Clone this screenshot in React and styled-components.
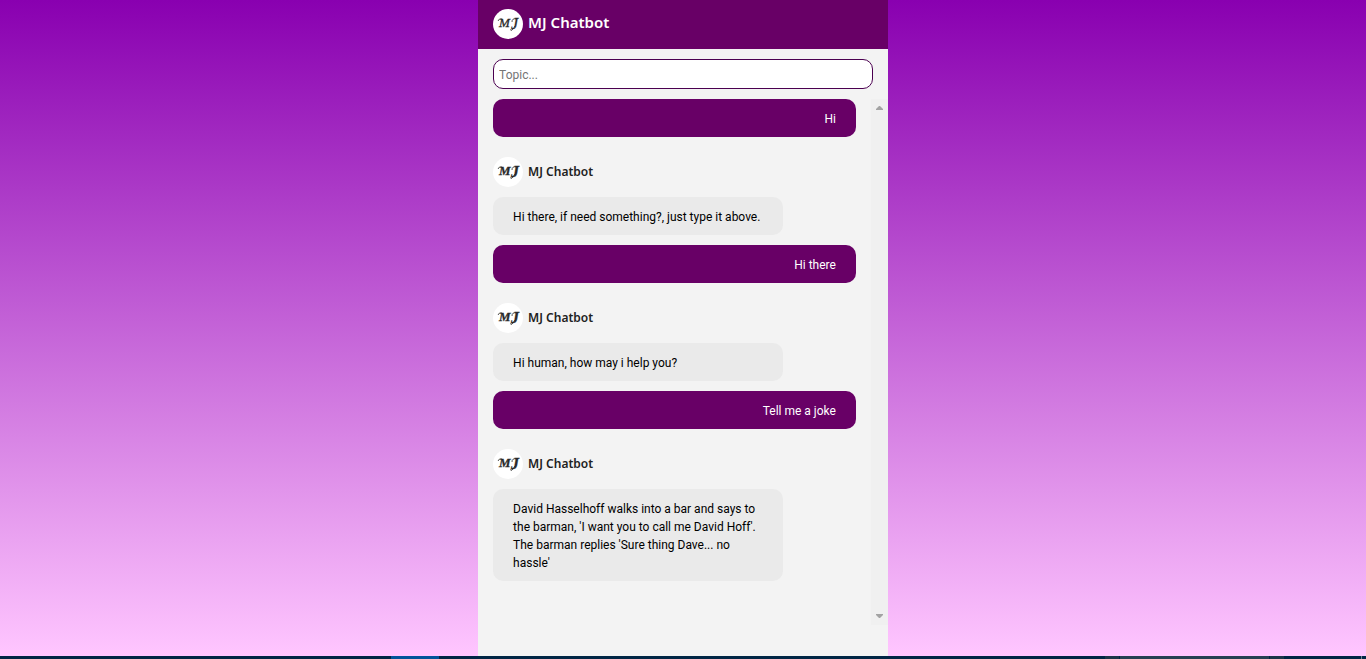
import React from "react";
import styled, { createGlobalStyle, css } from "styled-components";

const GlobalStyle = createGlobalStyle`
  * { box-sizing: border-box; }
  body {
    margin: 0;
    font-family: Roboto, "Noto Sans", sans-serif;
    font-size: 12px;
    line-height: 18px;
    color: #000;
  }
`;

const Page = styled.div`
  display: flex;
  flex-direction: column;
  height: 100vh;
`;

const Backdrop = styled.div`
  flex: 1;
  min-height: 0;
  display: flex;
  justify-content: center;
  background: linear-gradient(#8900b0, #ffc6ff);
`;

const Chat = styled.main`
  width: 30%;
  min-width: 320px;
  display: flex;
  flex-direction: column;
  background: #f3f3f3;
`;

const Header = styled.header`
  display: flex;
  align-items: center;
  gap: 5px;
  flex: none;
  padding: 9px 15px 10px;
  background: #680066;
  color: #fff;
`;

const Title = styled.h1`
  margin: 0;
  font-family: "Noto Sans", sans-serif;
  font-size: 15px;
  line-height: 26px;
  font-weight: 600;
  padding-bottom: 4px;
`;

const TopicForm = styled.form`
  display: flex;
  padding: 10px 15px;
`;

const TopicInput = styled.input`
  flex: 1;
  min-width: 0;
  height: 30px;
  padding: 2px 5px 0;
  border: 1px solid #4b0050;
  border-radius: 10px;
  background: #fff;
  font: inherit;
  outline: none;
  &::placeholder { color: #757575; opacity: 1; }
`;

const Conversation = styled.section`
  flex: 1;
  min-height: 0;
  display: flex;
  margin-bottom: 31px;
  padding-left: 15px;
`;

const Messages = styled.div`
  flex: 1;
  min-width: 0;
  padding-right: 15px;
  overflow: hidden;
`;

const bubble = css`
  margin: 0 0 10px;
  padding: 11px 20px 9px;
  border-radius: 10px;
`;

const UserMessage = styled.p`
  ${bubble}
  background: #680066;
  color: #fff;
  text-align: right;
`;

const BotMessage = styled.p`
  ${bubble}
  width: 80%;
  padding-right: 18px;
  background: #eaeaea;
`;

const Sender = styled.div`
  display: flex;
  align-items: center;
  gap: 5px;
  margin: 20px 0 10px;
  font-family: "Noto Sans", sans-serif;
  font-weight: 600;
  color: #212121;
`;

const Avatar = styled.svg`
  width: 30px;
  height: 30px;
  flex: none;
`;

const ScrollTrack = styled.div`
  width: 17px;
  flex: none;
  display: flex;
  flex-direction: column;
  justify-content: space-between;
  background: #f0f0f0;
`;

const Arrow = styled.svg`
  width: 17px;
  height: 17px;
  fill: #a3a3a3;
`;

const Taskbar = styled.footer`
  display: flex;
  height: 3px;
  flex: none;
  background: #002544;
`;

const TaskSegment = styled.div`
  flex: ${(p) => p.$grow || 0} 0 ${(p) => p.$width || 0}px;
  background: ${(p) => p.$color || "transparent"};
`;

function Logo() {
  return (
    <Avatar viewBox="0 0 30 30" aria-hidden="true">
      <circle cx="15" cy="15" r="15" fill="#fff" />
      <g fill="#292929" stroke="#292929" strokeWidth="0.3" fontFamily="Liberation Serif, serif" fontStyle="italic">
        <text x="6" y="18" fontSize="13">M</text>
        <text x="18" y="20" fontSize="16">J</text>
      </g>
      <path d="M5 12Q6 9 9 10M19 13Q19 9 23 10M18 20Q17 23 20 20L22 17" fill="none" stroke="#292929" strokeWidth="0.8" />
    </Avatar>
  );
}

const exchanges = [
  { user: "Hi", bot: "Hi there, if need something?, just type it above." },
  { user: "Hi there", bot: "Hi human, how may i help you?" },
  {
    user: "Tell me a joke",
    bot: "David Hasselhoff walks into a bar and says to the barman, 'I want you to call me David Hoff'. The barman replies 'Sure thing Dave... no hassle'",
  },
];

export default function App() {
  return (
    <Page>
      <GlobalStyle />
      <Backdrop>
        <Chat>
          <Header>
            <Logo />
            <Title>MJ Chatbot</Title>
          </Header>
          <TopicForm onSubmit={(e) => e.preventDefault()}>
            <TopicInput type="text" placeholder="Topic..." aria-label="Topic" />
          </TopicForm>
          <Conversation>
            <Messages>
              {exchanges.map((item) => (
                <React.Fragment key={item.user}>
                  <UserMessage>{item.user}</UserMessage>
                  <Sender>
                    <Logo />
                    MJ Chatbot
                  </Sender>
                  <BotMessage>{item.bot}</BotMessage>
                </React.Fragment>
              ))}
            </Messages>
            <ScrollTrack aria-hidden="true">
              <Arrow viewBox="0 0 17 17"><path d="M5 11H12V10L9 7H8L5 10Z" /></Arrow>
              <Arrow viewBox="0 0 17 17"><path d="M5 6H12V7L9 10H8L5 7Z" /></Arrow>
            </ScrollTrack>
          </Conversation>
        </Chat>
      </Backdrop>
      <Taskbar>
        <TaskSegment $width={391} />
        <TaskSegment $width={48} $color="#00539a" />
        <TaskSegment $grow={1} />
        <TaskSegment $width={14} $color="#1c3448" />
        <TaskSegment $width={1} />
        <TaskSegment $width={149} $color="#253f52" />
        <TaskSegment $width={1} />
        <TaskSegment $width={14} $color="#1c3448" />
        <TaskSegment $width={77} />
        <TaskSegment $width={1} $color="#6f8594" />
        <TaskSegment $width={4} />
      </Taskbar>
    </Page>
  );
}
